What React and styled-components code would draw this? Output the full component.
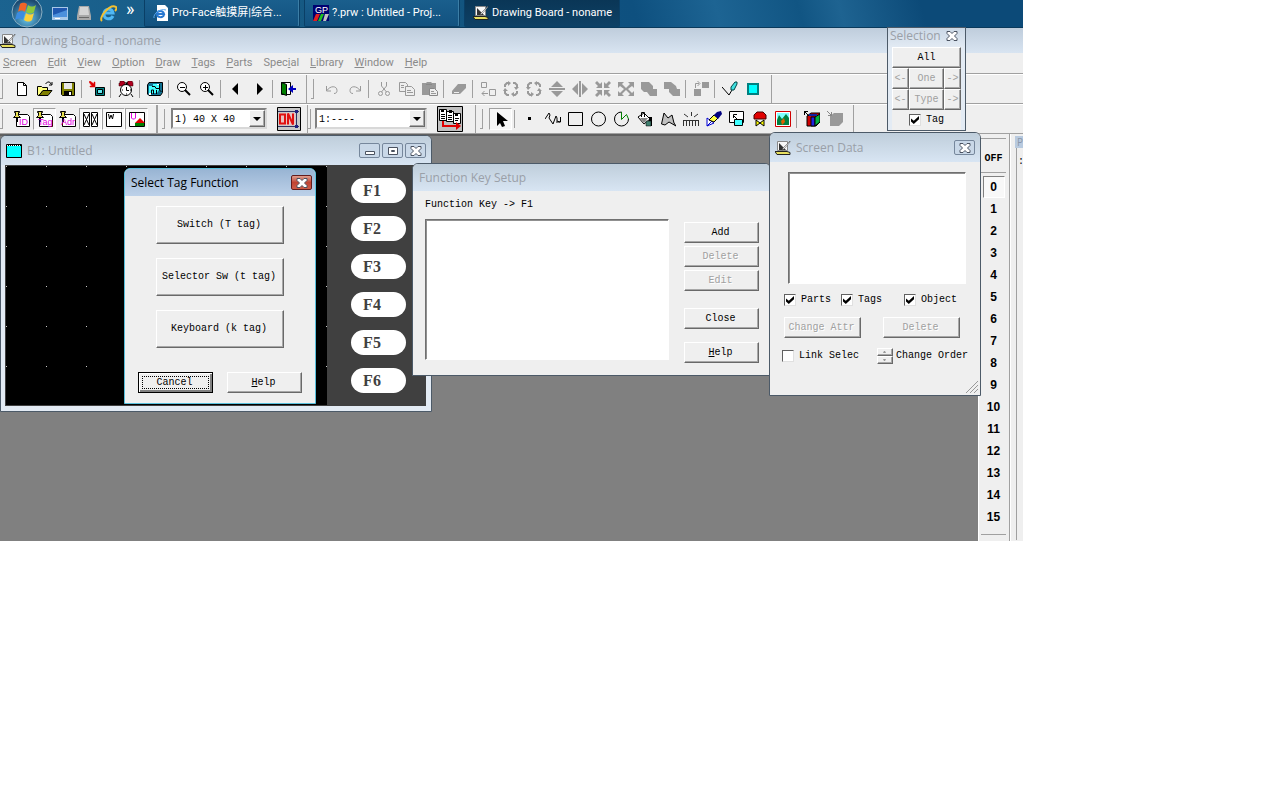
//IMPORT FUNCTIONALITY
import React, { useState } from 'react'
import styled, { createGlobalStyle, css } from 'styled-components'

//DATA
const menuItems = [
	['', 'S', 'creen'],
	['', 'E', 'dit'],
	['', 'V', 'iew'],
	['', 'O', 'ption'],
	['', 'D', 'raw'],
	['', 'T', 'ags'],
	['', 'P', 'arts'],
	['Spec', 'i', 'al'],
	['', 'L', 'ibrary'],
	['', 'W', 'indow'],
	['', 'H', 'elp'],
]

const fileTools = ['new', 'open', 'save', '|', 'transfer', '|', 'alarm', '|', 'project', '|', 'zoomOut', 'zoomIn', '|', 'prev', 'next', '|', 'exit']
const editTools = ['undo', 'redo', '|', 'cut', 'copy', 'paste', '|', 'erase', '|', 'duplicate', 'rotateLeft', 'rotateRight', 'flipV', 'flipH', 'shrink', 'expand', 'front', 'back', '|', 'align', '|', 'pen', 'color']
const drawTools = ['dot', 'polyline', 'rect', 'circle', 'pie', 'fill', 'polygon', 'scale', 'mark', 'load', 'lamp', 'image', '|', 'library', 'libraryOff']
const pageNumbers = Array.from({ length: 15 }, (_, index) => index + 1)
const functionKeys = ['F1', 'F2', 'F3', 'F4', 'F5', 'F6']

//ICONS
const icons = {
	new: <path d="M3.5 1.5h6l3 3v10h-9zM9.5 1.5v3h3" fill="#fff" stroke="#000" />,
	open: (
		<>
			<path d="M.5 14V5.5h4l1 1h5v3H6l-4 5z" fill="#ffff80" stroke="#000" />
			<path d="M2 14.5l4-5h9l-4 5z" fill="#808000" stroke="#000" />
			<path d="M8.5 3l2-2h2l2 2.5M15 1v3h-3" fill="none" stroke="#000" />
		</>
	),
	save: (
		<>
			<path d="M1.5 1.5h13v13h-12l-1-1z" fill="#808000" stroke="#000" />
			<path d="M4 2h8v6H4z" fill="#e8e8e8" />
			<path d="M4 10h8v4H4z" fill="#000" />
			<path d="M9 11h2v3H9z" fill="#fff" />
		</>
	),
	transfer: (
		<>
			<path d="M0 1l1-1 4 3V1h1v5H1V5h2z" fill="#e00000" stroke="#e00000" strokeWidth="0.5" />
			<path d="M6.5 6.5h9v8h-9z" fill="#008080" stroke="#000" />
			<path d="M8.5 8.5h5v4h-5z" fill="#60e8f0" stroke="#000" />
		</>
	),
	alarm: (
		<>
			<path d="M2 0h4v1h1v3H5v1H1V2h1zM10 0h4l1 2v3h-4V4H9V1h1z" fill="#b00020" stroke="#300" strokeWidth="0.5" />
			<circle cx="8" cy="9" r="5.5" fill="#fff" stroke="#000" />
			<path d="M8.5 6v3.5H11M3 13l-2 3M13 13l2 3M7 2h3M8.5 2v2M4 9h1M12 9h1M8 13h1" fill="none" stroke="#000" />
		</>
	),
	project: (
		<>
			<path d="M2 1.5h13.5v10l-2 3H2L.5 13V4z" fill="#107090" stroke="#000" />
			<path d="M2 5h4V3h6v6l-2 3H2z" fill="#40ffff" />
			<path d="M4.5 13V9h2v4M9.5 13V9M12.5 3v6l2 2M5 5.5h3l1 2h3" stroke="#000" fill="none" />
			<path d="M2 12h2v2H2zM10 3h2v1h-2z" fill="#fff" />
		</>
	),
	zoomOut: (
		<>
			<circle cx="6" cy="6" r="4.5" fill="#fff" stroke="#000" />
			<path d="M4 6.5h5" stroke="#000" />
			<path d="M9 9l5 5" stroke="#000" strokeWidth="2" />
		</>
	),
	zoomIn: (
		<>
			<circle cx="6" cy="6" r="4.5" fill="#fff" stroke="#000" />
			<path d="M4 6.5h5M6.5 4v5" stroke="#000" />
			<path d="M9 9l5 5" stroke="#000" strokeWidth="2" />
		</>
	),
	prev: <path d="M10 2v12L4 8z" fill="#000" />,
	next: <path d="M6 2v12l6-6z" fill="#000" />,
	exit: (
		<>
			<path d="M1.5 1.5h9v12h-9z" fill="#fff" stroke="#000" />
			<path d="M1.5 1.5l5 2v11l-5-2z" fill="#008000" stroke="#000" />
			<path d="M16 7h-3V4L8 8l5 4V9h3z" fill="#0000c0" />
		</>
	),
	undo: <path d="M2.5 5v5H7M3 9.5c3-5 10-5 10 0 0 2-1 3-3 3" fill="none" stroke="#999" />,
	redo: <path d="M13.5 5v5H9M13 9.5c-3-5-10-5-10 0 0 2 1 3 3 3" fill="none" stroke="#999" />,
	cut: (
		<g fill="none" stroke="#999">
			<path d="M5.5 1v4l5 6M10.5 1v4l-5 6" />
			<circle cx="4.5" cy="12.5" r="2" />
			<circle cx="11.5" cy="12.5" r="2" />
		</g>
	),
	copy: (
		<g fill="#eee" stroke="#999">
			<path d="M.5 1.5h6l2 2v7h-8z" />
			<path d="M6.5 5.5h6l3 3v6h-9z" />
			<path d="M2 4.5h3M2 6.5h3M8 9.5h4M8 11.5h6" />
		</g>
	),
	paste: (
		<>
			<path d="M0 2h4l1-1h4l1 1h4v12H0z" fill="#999" />
			<path d="M4 3.5h6M7.5 7.5h5l3 3v4h-8z" fill="#eee" stroke="#888" />
			<path d="M9 10.5h3M9 12.5h5" stroke="#999" />
		</>
	),
	erase: (
		<>
			<path d="M7 3h8v4l-6 6H1v-3z" fill="#999" />
			<path d="M2.5 10.5h6v2h-6z" fill="#efefef" stroke="#999" />
		</>
	),
	duplicate: (
		<g fill="none" stroke="#999">
			<path d="M1.5 1.5h5v5h-5zM9.5 8.5h6v6h-6zM2 12.5h6M4.5 10L2 12.5 4.5 15" />
		</g>
	),
	rotateLeft: (
		<g fill="none" stroke="#999" strokeWidth="2">
			<path d="M2 6V4l2-2h2M10 2h2l2 2v2M14 10v2l-2 2h-2M6 14H4l-2-2v-2" />
			<path d="M5 0v5l3-3zM11 6h5l-3 3zM11 11v5l-3-3zM0 10h5l-3-3z" fill="#999" stroke="none" />
		</g>
	),
	rotateRight: (
		<g fill="none" stroke="#999" strokeWidth="2">
			<path d="M2 6V4l2-2h2M10 2h2l2 2v2M14 10v2l-2 2h-2M6 14H4l-2-2v-2" />
			<path d="M11 0v5L8 2zM11 10h5l-3-3zM5 11v5l3-3zM0 6h5L2 9z" fill="#999" stroke="none" />
		</g>
	),
	flipV: <path d="M8 0l6 6H2zM2 10h12l-6 6zM0 7h16v2H0z" fill="#999" />,
	flipH: <path d="M6 2v12L0 8zM10 2l6 6-6 6zM7 0h2v16H7z" fill="#999" />,
	shrink: <path d="M2 0l3 3 2-2v6H1l2-2-3-3zM14 0l-3 3-2-2v6h6l-2-2 3-3zM2 16l3-3 2 2V9H1l2 2-3 3zM14 16l-3-3-2 2V9h6l-2 2 3 3z" fill="#999" />,
	expand: <path d="M0 1h6L4 3l4 4 4-4-2-2h6v6l-2-2-4 3 4 4 2-2v5h-6l2-2-4-4-4 4 2 2H0v-5l2 2 4-4-4-3-2 2z" fill="#999" />,
	front: <path d="M0 1h8l4 4v3h4v7H9l-3-4H3L0 8z" fill="#999" />,
	back: <path d="M0 1h7l5 4 1 3h3v7H9l-4-4V8H0z" fill="#999" />,
	align: (
		<>
			<path d="M9 1h7v6H9zM1 8h7v7H1z" fill="#999" />
			<path d="M2.5 7V2.5H6M4.5 0L7 2.5 4.5 5" fill="none" stroke="#999" />
		</>
	),
	pen: (
		<>
			<path d="M0 6l7 8 3-5" fill="none" stroke="#000" />
			<path d="M9 9V6l4-5h2v2l-3 6z" fill="#40e0e0" stroke="#044" />
		</>
	),
	color: <path d="M3 3h10v10H3z" fill="#00ffff" stroke="#008080" strokeWidth="2" />,
	cursor: <path d="M4 1v14l3-3 2 4 3-1-2-5h5z" fill="#000" />,
	dot: <path d="M6 6h3v3H6z" fill="#000" />,
	polyline: <path d="M0 8l4-6 1 2-1 3 4 6 3-8 1 2v3l3 1M15.5 6v5H11" fill="none" stroke="#000" />,
	rect: <path d="M.5 1.5h14v13H.5z" fill="none" stroke="#000" />,
	circle: <circle cx="7.5" cy="8" r="7" fill="none" stroke="#000" />,
	pie: (
		<>
			<path d="M7.5 1a7 7 0 1 0 7 7" fill="none" stroke="#000" />
			<path d="M7.5 1v7.5l5-5 2 4.5" fill="none" stroke="#008000" />
		</>
	),
	fill: (
		<>
			<path d="M1 6l6-4 6 6-6 5z" fill="#fff" stroke="#000" />
			<path d="M3 7h8l-4 5z" fill="#888" />
			<path d="M4.5 6V1.5h3V6" fill="none" stroke="#000" />
			<path d="M12 6h3v9h-3z" fill="#000" />
			<path d="M9 10h5v5H9z" fill="#408070" stroke="#000" strokeWidth="0.5" />
		</>
	),
	polygon: <path d="M1.5 13L4 2l4 5 4-3 2 8 2 3-7-4-4 3z" fill="#c0c0c0" stroke="#000" />,
	scale: <path d="M0 9.5h16M.5 9v6M3.5 9v6M6.5 9v6M9.5 9v6M12.5 9v6M15.5 9v6M1 3l4 3M8.5 1v4M15 3l-4 3" fill="none" stroke="#333" />,
	mark: (
		<>
			<path d="M1 15V7l7 5zM1 15l7-7" fill="#fff" stroke="#0000d0" />
			<path d="M3 9l5-5 4 3-4 4z" fill="#ffff40" stroke="#000" />
			<path d="M8 4l3-3 4-1 1 3-4 5z" fill="#000080" />
		</>
	),
	load: (
		<>
			<path d="M.5 .5h14v11H.5z" fill="#fff" stroke="#000" />
			<path d="M4 4l4 4M4.5 7V3.500H8" fill="none" stroke="#000" />
			<path d="M5.5 8.5h8v6h-8z" fill="#40ffff" stroke="#000" />
		</>
	),
	lamp: (
		<>
			<path d="M5 1h6l3 3v4H2V4z" fill="#e00000" stroke="#400" />
			<path d="M4 9l4 3 4-3v6l-4-3-4 3z" fill="#ffff00" stroke="#000" />
		</>
	),
	image: (
		<>
			<path d="M.5 .5h15v15H.5z" fill="#fff" stroke="#d00000" />
			<path d="M2 2h12v12H2z" fill="#80ffff" />
			<path d="M2 14V9l2-5 3 4 4-5 3 4v7z" fill="#008040" />
			<path d="M6 10l3-3 1 4-3 3z" fill="#e06000" />
		</>
	),
	library: (
		<>
			<path d="M3 5l4-3h9v9l-4 4H3z" fill="#d00000" stroke="#000" />
			<path d="M7 6h4v9H7z" fill="#2020e0" stroke="#000" />
			<path d="M11 6l5-3v8l-5 4z" fill="#00b040" stroke="#000" />
			<path d="M5 3h8v2H5z" fill="#1020a0" />
			<path d="M0 .5h4M.5 0v4M0 0l5 5" stroke="#000" />
		</>
	),
	libraryOff: (
		<>
			<path d="M3 5l4-3h9v9l-4 4H3z" fill="#999" />
			<path d="M0 0l5 5M4.5 1v3.5H1" stroke="#888" fill="none" />
		</>
	),
}

function Icon({ name, size = 16 }) {
	return (
		<svg width={size} height={size} viewBox="0 0 16 16" aria-hidden="true">
			{icons[name]}
		</svg>
	)
}

function BoardIcon() {
	return (
		<svg width="16" height="16" viewBox="0 0 16 16" aria-hidden="true">
			<path d="M2.5 1.5h10v9h-10z" fill="#f8f8f8" stroke="#888" />
			<path d="M4 3l7 7H4z" fill="#333" />
			<path d="M15 1L8 8l-1 2 2-1 6-7z" fill="#fff" stroke="#333" strokeWidth="0.5" />
			<path d="M0 11.5h12l3 1v2H2z" fill="#e8e060" stroke="#222" />
		</svg>
	)
}

function TagIcon({ text }) {
	return (
		<svg width="18" height="18" viewBox="0 0 18 18" aria-hidden="true">
			<path d="M3.5 4.5h11l2 2v10h-13z" fill="#fff" stroke="#000" />
			<path d="M1.5 1.5h5v1h-1v3l2 2h-7l2-2v-3h-1z" fill="#e8e050" stroke="#000" />
			<path d="M4.5 8v4" stroke="#000" />
			<text x={text.length > 2 ? 2 : 6} y="15" fill="#e000e0" fontSize="9" fontFamily="Liberation Sans, sans-serif">
				{text}
			</text>
		</svg>
	)
}

function BracketIcon() {
	return (
		<svg width="18" height="18" viewBox="0 0 18 18" aria-hidden="true">
			<path d="M1.5 2.5h6v14h-6zM9.5 2.5h6v14h-6z" fill="#fff" stroke="#000" />
			<path d="M2 4l5 11M7 4L2 15M10 4l5 11M15 4l-5 11" fill="none" stroke="#000" />
		</svg>
	)
}

function WordIcon() {
	return (
		<svg width="18" height="18" viewBox="0 0 18 18" aria-hidden="true">
			<path d="M1.5 2.5h15v14h-15z" fill="#fff" stroke="#000" />
			<path d="M3.5 4l1 5L6 5l1.5 4 1-5" fill="none" stroke="#000" />
		</svg>
	)
}

function UserIcon() {
	return (
		<svg width="18" height="18" viewBox="0 0 18 18" aria-hidden="true">
			<path d="M1.5 2.5h15v14h-15z" fill="#fff" stroke="#000" />
			<path d="M3.5 3v5l1 1h2l1-1V3" fill="none" stroke="#e000e0" />
			<path d="M7 13l5-5 5 5z" fill="#e00000" />
			<path d="M7 13h9v3H7z" fill="#008000" />
		</svg>
	)
}

function OnIcon() {
	return (
		<svg width="24" height="24" viewBox="0 0 24 24" aria-hidden="true">
			<path d="M.5 .5h23v23H.5z" fill="#c8c8c8" stroke="#000" />
			<path d="M1 4.5h21M1 19.5h21M19.5 3v18" stroke="#303060" />
			<path d="M18 4.5h3M18 19.5h3" stroke="#202080" strokeWidth="3" />
			<path d="M2 6h16v12H2z" fill="#e8c0c0" />
			<path d="M3 7.5h5v9H3z" fill="none" stroke="#e01010" strokeWidth="2" />
			<path d="M11 17.5v-11l5 11v-11" fill="none" stroke="#e01010" strokeWidth="2" />
		</svg>
	)
}

function PagesIcon() {
	return (
		<svg width="26" height="26" viewBox="0 0 26 26" aria-hidden="true">
			<path d="M.5 .5h25v25H.5z" fill="#c0c0c0" stroke="#000" />
			<path d="M2.5 3.5h7v11h-7zM9.5 5.5h7v10h-7zM16.5 7.5h7v10h-7z" fill="#fff" stroke="#000" />
			<path d="M4 8.5h4M4 10.5h4M4 12.5h4M11 9.5h4M11 11.5h4M11 13.5h4M18 12.5h4M18 14.5h3" stroke="#000" />
			<path d="M4 3h3v3H4zM12 4h3v3h-3zM18 7h3v3h-3z" fill="#000" />
			<path d="M6 15v5h14" fill="none" stroke="#e00000" strokeWidth="2" />
			<path d="M19 16l5 4-5 4z" fill="#e00000" />
		</svg>
	)
}

function CrossIcon() {
	return (
		<svg width="12" height="10" viewBox="0 0 12 10" aria-hidden="true">
			<path d="M1 .5h3l2 2 2-2h3v2L8.5 5 11 7.5v2H8l-2-2-2 2H1v-2L3.5 5 1 2.5z" fill="#fff" stroke="#4a5260" />
		</svg>
	)
}

function StartOrb() {
	return (
		<svg width="32" height="28" viewBox="0 0 32 28" aria-hidden="true">
			<defs>
				<radialGradient id="orb" cx="50%" cy="70%" r="60%">
					<stop offset="0" stopColor="#68c8f0" />
					<stop offset="1" stopColor="#1c4a70" />
				</radialGradient>
			</defs>
			<circle cx="16" cy="12" r="15" fill="url(#orb)" stroke="#8ab0c4" />
			<path d="M9 4c3-2 5-1 7 0l-2 8c-2-2-5-2-7 0z" fill="#f06428" />
			<path d="M17 5c3 2 5 2 8 0l-2 7c-2 2-5 2-8 0z" fill="#8cc83c" />
			<path d="M6 13c3-2 5-2 8 0l-2 7c-2-2-5-2-8 0z" fill="#3c8ce0" />
			<path d="M15 13c3 2 5 2 8 0l-2 7c-2 2-5 2-8 0z" fill="#fcd038" />
		</svg>
	)
}

function DesktopIcon() {
	return (
		<svg width="16" height="14" viewBox="0 0 16 14" aria-hidden="true">
			<path d="M0 0h16v13H0z" fill="#a8c8e8" />
			<path d="M1 1h14v9H1z" fill="#2058b0" />
			<path d="M1 8l14-5v7H1z" fill="#4c90dc" />
			<path d="M3 11h5v1H3z" fill="#fff" />
		</svg>
	)
}

function DriveIcon() {
	return (
		<svg width="14" height="15" viewBox="0 0 14 15" aria-hidden="true">
			<path d="M2 0h10l2 10v4H0v-4z" fill="#a8a8a8" />
			<path d="M3 1h8l1 8H2z" fill="#d4d4d4" />
			<path d="M2 11h10v1H2z" fill="#686868" />
		</svg>
	)
}

function ExplorerIcon() {
	return (
		<svg width="17" height="17" viewBox="0 0 17 17" aria-hidden="true">
			<path d="M13 11c-2 4-9 4-9-2s8-6 9-1H5" fill="none" stroke="#50b8f4" strokeWidth="3" />
			<path d="M2 16c-4-3 8-18 14-14 1 1 0 3-1 4" fill="none" stroke="#f4c030" strokeWidth="2" />
		</svg>
	)
}

function PageIcon() {
	return (
		<svg width="16" height="16" viewBox="0 0 16 16" aria-hidden="true">
			<path d="M4 0h8l3 3v13H4z" fill="#fff" />
			<path d="M11 10c-1 3-7 3-7-1s6-4 7 0H5" fill="none" stroke="#2878d0" strokeWidth="2" />
			<path d="M1 13C0 9 7 3 13 5" fill="none" stroke="#58a8f0" />
		</svg>
	)
}

function GpIcon() {
	return (
		<svg width="16" height="16" viewBox="0 0 16 16" aria-hidden="true">
			<path d="M0 0h16v16H0z" fill="#000070" />
			<text x="2" y="8" fill="#fff" fontSize="9" fontFamily="Liberation Sans, sans-serif">
				GP
			</text>
			<path d="M3 9h4l-3 7H0z" fill="#e02020" />
			<path d="M8 9h3l-3 7H5z" fill="#20c020" />
			<path d="M12 9h4l-3 7h-3z" fill="#c0c0c0" />
		</svg>
	)
}

//COMPONENTS
function Tools({ names }) {
	return names.map((name, index) =>
		name === '|' ? (
			<Separator key={index} />
		) : (
			<ToolButton key={index} aria-label={name}>
				<Icon name={name} />
			</ToolButton>
		)
	)
}

function Dropdown({ label, value, width }) {
	return (
		<SelectFrame $width={width}>
			<Select aria-label={label}>
				<option>{value}</option>
			</Select>
			<SelectArrow>
				<svg width="8" height="4" viewBox="0 0 8 4" aria-hidden="true">
					<path d="M0 0h8L4 4z" fill="#000" />
				</svg>
			</SelectArrow>
		</SelectFrame>
	)
}

function Check({ label, defaultChecked }) {
	return (
		<CheckLabel>
			<CheckBox type="checkbox" defaultChecked={defaultChecked} />
			{label}
		</CheckLabel>
	)
}

export default function App() {
	const [activePage, setActivePage] = useState(0)

	return (
		<Desktop>
			<GlobalStyle />
			<Taskbar>
				<QuickLaunch>
					<QuickButton aria-label="Start">
						<StartOrb />
					</QuickButton>
					<QuickButton aria-label="Desktop">
						<DesktopIcon />
					</QuickButton>
					<QuickButton aria-label="Drive">
						<DriveIcon />
					</QuickButton>
					<QuickButton aria-label="Browser">
						<ExplorerIcon />
					</QuickButton>
					<More>»</More>
				</QuickLaunch>
				<Task>
					<PageIcon />
					Pro-Face触摸屏|综合...
				</Task>
				<Task>
					<GpIcon />
					?.prw : Untitled - Proj...
				</Task>
				<Task $active>
					<BoardIcon />
					Drawing Board - noname
				</Task>
			</Taskbar>

			<AppTitle>
				<BoardIcon />
				Drawing Board - noname
			</AppTitle>
			<MenuBar>
				{menuItems.map(([before, key, after]) => (
					<MenuItem key={before + key + after}>
						{before}
						<u>{key}</u>
						{after}
					</MenuItem>
				))}
			</MenuBar>

			<ToolRow>
				<ToolGroup $width="307px">
					<Tools names={fileTools} />
				</ToolGroup>
				<ToolGroup $width="465px" $grip>
					<Tools names={editTools} />
				</ToolGroup>
			</ToolRow>
			<ToolRow>
				<ToolGroup $width="158px" $thick>
					<ToolButton aria-label="ID">
						<TagIcon text="ID" />
					</ToolButton>
					<ToolButton $pressed aria-label="Tag">
						<TagIcon text="Tag" />
					</ToolButton>
					<ToolButton aria-label="Address">
						<TagIcon text="Adr" />
					</ToolButton>
					<ToolButton $pressed aria-label="Parts">
						<BracketIcon />
					</ToolButton>
					<ToolButton $pressed aria-label="Word">
						<WordIcon />
					</ToolButton>
					<ToolButton $pressed aria-label="User">
						<UserIcon />
					</ToolButton>
				</ToolGroup>
				<ToolGroup $width="150px" $grip>
					<Dropdown label="Grid" value="1) 40 X 40" width="96px" />
					<LargeTool aria-label="ON">
						<OnIcon />
					</LargeTool>
				</ToolGroup>
				<ToolGroup $width="168px" $narrow>
					<Dropdown label="State" value="1:----" width="112px" />
					<LargeTool aria-label="Pages">
						<PagesIcon />
					</LargeTool>
				</ToolGroup>
				<ToolGroup $width="378px" $grip>
					<ToolButton $pressed aria-label="Select">
						<Icon name="cursor" />
					</ToolButton>
					<Separator />
					<Tools names={drawTools} />
				</ToolGroup>
			</ToolRow>

			<Workspace>
				<Canvas />
				<PageBar>
					<OffButton>OFF</OffButton>
					<PageButton $active={activePage === 0} onClick={() => setActivePage(0)}>
						0
					</PageButton>
					{pageNumbers.map(number => (
						<PageButton key={number} $active={activePage === number} onClick={() => setActivePage(number)}>
							{number}
						</PageButton>
					))}
				</PageBar>
				<SidePanel>
					<SideTitle>P</SideTitle>
					<SideBody>:</SideBody>
				</SidePanel>
			</Workspace>

			<BoardWindow>
				<TitleBar $tall>
					<svg width="16" height="14" viewBox="0 0 16 14" aria-hidden="true">
						<path d="M.5 .5h15v13H.5z" fill="#00ffff" stroke="#000" />
						<path d="M1 1.5h14" stroke="#000" />
						<path d="M1 1.5h14" stroke="#fff" strokeDasharray="1 1" />
					</svg>
					<TitleText>B1: Untitled</TitleText>
					<WindowButton aria-label="Minimize">
						<svg width="12" height="10" viewBox="0 0 12 10" aria-hidden="true">
							<path d="M1.5 5.5h9v3h-9z" fill="#fff" stroke="#4a5260" />
						</svg>
					</WindowButton>
					<WindowButton aria-label="Restore">
						<svg width="12" height="10" viewBox="0 0 12 10" aria-hidden="true">
							<path d="M1.5 1.5h9v7h-9zM4.5 4.5h3v1h-3z" fill="#fff" stroke="#4a5260" />
						</svg>
					</WindowButton>
					<WindowButton aria-label="Close board">
						<CrossIcon />
					</WindowButton>
				</TitleBar>
				<BoardBody>
					<BoardGrid aria-hidden="true">
						<defs>
							<pattern id="grid" width="40" height="40" patternUnits="userSpaceOnUse">
								<rect width="1" height="1" fill="#ccc" />
							</pattern>
						</defs>
						<rect width="100%" height="100%" fill="url(#grid)" />
					</BoardGrid>
					<KeyPad>
						{functionKeys.map(name => (
							<FunctionKey key={name}>{name}</FunctionKey>
						))}
					</KeyPad>
				</BoardBody>
			</BoardWindow>

			<KeyWindow>
				<TitleBar>
					<TitleText>Function Key Setup</TitleText>
				</TitleBar>
				<KeyBody>
					<div>
						<KeyLabel>Function Key -&gt; F1</KeyLabel>
						<ListBox $height="141px" />
					</div>
					<KeyButtons>
						<PushButton>Add</PushButton>
						<PushButton disabled>Delete</PushButton>
						<PushButton disabled>Edit</PushButton>
						<PushButton $gap="14px">Close</PushButton>
						<PushButton $gap="10px">
							<u>H</u>elp
						</PushButton>
					</KeyButtons>
				</KeyBody>
			</KeyWindow>

			<TagWindow>
				<TitleBar $active>
					<TitleText>Select Tag Function</TitleText>
					<WindowButton $danger aria-label="Close dialog">
						<CrossIcon />
					</WindowButton>
				</TitleBar>
				<TagBody>
					<PushButton $large>Switch (T tag)</PushButton>
					<PushButton $large>Selector Sw (t tag)</PushButton>
					<PushButton $large>Keyboard (k tag)</PushButton>
				</TagBody>
				<TagFooter>
					<PushButton $default>Cancel</PushButton>
					<PushButton>
						<u>H</u>elp
					</PushButton>
				</TagFooter>
			</TagWindow>

			<SelectionWindow>
				<SelectionTitle>
					Selection
					<PlainButton aria-label="Close selection">
						<CrossIcon />
					</PlainButton>
				</SelectionTitle>
				<SelectionGrid>
					<AllButton>All</AllButton>
					<GridButton disabled>&lt;-</GridButton>
					<GridButton disabled>One</GridButton>
					<GridButton disabled>-&gt;</GridButton>
					<GridButton disabled>&lt;-</GridButton>
					<GridButton disabled>Type</GridButton>
					<GridButton disabled>-&gt;</GridButton>
				</SelectionGrid>
				<SelectionCheck>
					<Check label="Tag" defaultChecked />
				</SelectionCheck>
			</SelectionWindow>

			<DataWindow>
				<TitleBar $tall>
					<BoardIcon />
					<TitleText>Screen Data</TitleText>
					<WindowButton aria-label="Close data">
						<CrossIcon />
					</WindowButton>
				</TitleBar>
				<DataBody>
					<ListBox $height="112px" />
					<DataChecks>
						<Check label="Parts" defaultChecked />
						<Check label="Tags" defaultChecked />
						<Check label="Object" defaultChecked />
					</DataChecks>
					<DataButtons>
						<PushButton disabled>Change Attr</PushButton>
						<PushButton disabled>Delete</PushButton>
					</DataButtons>
					<DataOrder>
						<Check label="Link Selec" />
						<OrderLabel>
							<Spinner>
								<SpinButton disabled aria-label="Order up">
									<svg width="3" height="2" viewBox="0 0 3 2" aria-hidden="true">
										<path d="M0 2h3L2 0H1z" fill="#999" />
									</svg>
								</SpinButton>
								<SpinButton disabled aria-label="Order down">
									<svg width="3" height="2" viewBox="0 0 3 2" aria-hidden="true">
										<path d="M0 0h3L2 2H1z" fill="#999" />
									</svg>
								</SpinButton>
							</Spinner>
							Change Order
						</OrderLabel>
					</DataOrder>
				</DataBody>
				<ResizeGrip>
					<svg width="12" height="12" viewBox="0 0 12 12" aria-hidden="true">
						<path d="M0 12L12 0M4 12l8-8M8 12l4-4" stroke="#999" />
					</svg>
				</ResizeGrip>
			</DataWindow>
		</Desktop>
	)
}

//STYLES
const uiFont = '"Open Sans", "Noto Sans CJK SC", sans-serif'
const smallFont = 'Roboto, "Noto Sans CJK SC", sans-serif'
const fixedFont = '"Liberation Mono", monospace'

const GlobalStyle = createGlobalStyle`
	* {
		box-sizing: border-box;
	}
	body {
		margin: 0;
		background: #fff;
	}
	button, input, select {
		margin: 0;
		padding: 0;
		font: inherit;
		color: inherit;
	}
	svg {
		display: block;
		flex: none;
	}
`

const raised = css`
	border: 1px solid;
	border-color: #fff #696969 #696969 #fff;
	box-shadow: inset -1px -1px 0 #a8a8a8;
`

const sunken = css`
	border: 1px solid;
	border-color: #606060 #e0e0e0 #e0e0e0 #606060;
`

const Desktop = styled.div`
	position: relative;
	margin-right: 257px;
	overflow: hidden;
	background: #efefef;
	color: #000;
	font-family: ${fixedFont};
	font-size: 10px;
	line-height: 12px;
	white-space: nowrap;
`

const Taskbar = styled.div`
	display: flex;
	gap: 4px;
	height: 28px;
	background: linear-gradient(75deg, #1b6390 0%, #14567f 40%, #0e507f 62%, #1d6493 70%, #115583 78%, #1e6391 82%, #0c4a78 90%);
	border-bottom: 1px solid #0a3a5c;
	color: #fff;
	font-family: ${smallFont};
	font-size: 11px;
`

const QuickLaunch = styled.div`
	display: flex;
	align-items: center;
	gap: 9px;
	width: 140px;
	padding-left: 11px;
`

const QuickButton = styled.button`
	border: none;
	background: none;
`

const More = styled.span`
	padding-bottom: 10px;
	font-size: 18px;
	line-height: 20px;
`

const Task = styled.button`
	display: flex;
	align-items: center;
	gap: 3px;
	width: 156px;
	padding-left: 8px;
	overflow: hidden;
	border: 1px solid #0a3f66;
	border-top: none;
	border-radius: 0 0 2px 2px;
	background: ${props => (props.$active ? 'linear-gradient(#0a3656, #0d4065)' : 'linear-gradient(#1a5f8d, #125280)')};
	box-shadow: ${props => (props.$active ? 'none' : 'inset -1px 0 0 #3c7ea6')};
`

const AppTitle = styled.div`
	display: flex;
	align-items: center;
	gap: 5px;
	height: 25px;
	background: linear-gradient(#bfcddc, #d8e4f1);
	color: #9aa0a8;
	font-family: ${uiFont};
	font-size: 12px;
`

const MenuBar = styled.nav`
	display: flex;
	align-items: center;
	gap: 11px;
	height: 21px;
	padding-left: 3px;
	border-bottom: 1px solid #a0a0a0;
	color: #8a8a8a;
	font-family: ${smallFont};
	font-size: 11px;
`

const MenuItem = styled.button`
	border: none;
	background: none;
`

const ToolRow = styled.div`
	display: flex;
	height: 30px;
	border-top: 1px solid #fff;
	border-bottom: 1px solid #a0a0a0;
`

const ToolGroup = styled.div`
	display: flex;
	align-items: center;
	width: ${props => props.$width};
	padding-bottom: 1px;
	padding-left: ${props => (props.$narrow ? '7px' : props.$grip ? '13px' : '10px')};
	border-right: ${props => (props.$thick ? '2px' : '1px')} solid #a0a0a0;
	position: relative;
	&::before {
		content: '';
		position: absolute;
		left: ${props => (props.$grip ? '4px' : '0')};
		top: 4px;
		bottom: 4px;
		width: 2px;
		border-right: 1px solid #a0a0a0;
		border-bottom: 1px solid #a0a0a0;
	}
`

const ToolButton = styled.button`
	display: grid;
	place-items: center;
	width: 23px;
	height: 22px;
	border: 1px solid;
	border-color: ${props => (props.$pressed ? '#a0a0a0 #fff #fff #a0a0a0' : 'transparent')};
	background: ${props => (props.$pressed ? '#f7f7f7' : 'none')};
`

const Separator = styled.span`
	width: 1px;
	height: 18px;
	margin: 0 3px 0 2px;
	background: #a0a0a0;
`

const LargeTool = styled.button`
	margin-left: 10px;
	border: none;
	background: none;
`

const SelectFrame = styled.div`
	position: relative;
	width: ${props => props.$width};
	height: 21px;
	border: 2px solid;
	border-color: #808080 #d8d8d8 #d8d8d8 #808080;
	background: #fff;
`

const Select = styled.select`
	appearance: none;
	display: block;
	width: 100%;
	height: 17px;
	padding: 2px 0 0 2px;
	border: none;
	outline: none;
	background: none;
`

const SelectArrow = styled.span`
	position: absolute;
	top: 0;
	right: 0;
	bottom: 0;
	display: grid;
	place-items: center;
	width: 16px;
	background: #efefef;
	pointer-events: none;
	${raised}
`

const Workspace = styled.div`
	display: flex;
`

const Canvas = styled.main`
	flex: 1;
	border-top: 2px solid #606060;
	background: #808080;
`

const PageBar = styled.div`
	display: flex;
	flex-direction: column;
	align-items: center;
	width: 32px;
	padding: 4px 3px 6px 2px;
	border-right: 1px solid #a0a0a0;
	border-left: 1px solid #fff;
	font-family: 'Liberation Sans', sans-serif;
	font-size: 12px;
	font-weight: bold;
	&::after {
		content: '';
		width: 100%;
		margin-top: 6px;
		border-top: 1px solid #a0a0a0;
	}
`

const OffButton = styled.button`
	width: 100%;
	height: 35px;
	margin-bottom: 3px;
	padding-top: 6px;
	border: 1px solid #a0a0a0;
	border-width: 1px 0;
	background: none;
	font-family: ${fixedFont};
	font-size: 10px;
`

const PageButton = styled.button`
	width: 22px;
	height: 22px;
	border: 1px solid;
	border-color: ${props => (props.$active ? '#808080 #fff #fff #808080' : 'transparent')};
	background: ${props => (props.$active ? '#f8f8f8' : 'none')};
`

const SidePanel = styled.div`
	width: 13px;
	padding: 2px 0 0 4px;
	border-left: 1px solid #fff;
`

const SideTitle = styled.div`
	padding-left: 2px;
	background: #b8cadf;
	color: #8b98aa;
	font-family: ${uiFont};
`

const SideBody = styled.div`
	height: 392px;
	margin-left: 1px;
	padding: 8px 0 0 1px;
	border-left: 1px solid #a0a0a0;
`

const windowFrame = css`
	position: absolute;
	border: 1px solid #4c5a68;
	border-radius: 6px 6px 0 0;
	background: #efefef;
	overflow: hidden;
`

const TitleBar = styled.div`
	display: flex;
	align-items: center;
	gap: 2px;
	height: ${props => (props.$tall ? '29px' : '27px')};
	padding: 0 5px;
	background: ${props => (props.$active ? 'linear-gradient(#98b4d3, #bdd1e9)' : 'linear-gradient(#bfcedb, #d8e5f3)')};
	color: ${props => (props.$active ? '#000' : '#9aa0a8')};
	font-family: ${uiFont};
	font-size: 12px;
`

const TitleText = styled.span`
	flex: 1;
	padding-left: 1px;
	svg + & {
		padding-left: 3px;
	}
`

const WindowButton = styled.button`
	display: grid;
	place-items: center;
	width: 21px;
	height: 15px;
	border: 1px solid ${props => (props.$danger ? '#641c1c' : '#76879c')};
	border-radius: 2px;
	background: ${props => (props.$danger ? 'linear-gradient(#e0a090, #c04434 50%, #cf5c48)' : '#c9d8e8')};
`

const BoardWindow = styled.section`
	${windowFrame}
	left: 0;
	top: 135px;
	width: 432px;
	padding: 0 5px 5px 4px;
	background: #e3ebf4;
	${TitleBar} {
		margin: 0 -5px 0 -4px;
	}
`

const BoardBody = styled.div`
	display: flex;
	height: 241px;
	border: 1px solid #404040;
	background: #000;
`

const BoardGrid = styled.svg`
	flex: 1;
	min-width: 0;
	height: 100%;
`

const KeyPad = styled.div`
	display: flex;
	flex-direction: column;
	align-items: center;
	gap: 13px;
	flex: none;
	width: 98px;
	padding: 12px 0 0 4px;
	background: #404040;
`

const FunctionKey = styled.button`
	width: 55px;
	height: 25px;
	padding-right: 12px;
	border: none;
	border-radius: 13px;
	background: #fff;
	color: #404040;
	font-family: 'Liberation Serif', serif;
	font-size: 16px;
	font-weight: bold;
`

const PushButton = styled.button`
	width: ${props => (props.$large ? '128px' : '75px')};
	height: ${props => (props.$large ? '38px' : '21px')};
	margin-top: ${props => props.$gap || '0'};
	padding: 0 2px 0 0;
	background: #efefef;
	${raised}
	&:disabled {
		color: #a0a0a0;
		text-shadow: 1px 1px 0 #fff;
	}
	${props =>
		props.$default &&
		css`
			border-color: #000;
			box-shadow: inset 1px 1px 0 #fff, inset -2px -2px 0 #808080;
			outline: 1px dotted #000;
			outline-offset: -5px;
		`}
`

const ListBox = styled.div`
	height: ${props => props.$height};
	background: #fff;
	border: 1px solid;
	border-color: #707070 #fff #fff #707070;
	box-shadow: inset 1px 1px 0 #909090;
`

const KeyWindow = styled.section`
	${windowFrame}
	left: 412px;
	top: 163px;
	width: 359px;
	height: 213px;
`

const KeyBody = styled.div`
	display: grid;
	grid-template-columns: 1fr 75px;
	gap: 15px;
	padding: 0 11px 0 12px;
`

const KeyLabel = styled.p`
	margin: 8px 0;
`

const KeyButtons = styled.div`
	display: flex;
	flex-direction: column;
	gap: 3px;
	padding-top: 31px;
`

const TagWindow = styled.section`
	${windowFrame}
	left: 124px;
	top: 168px;
	width: 192px;
	border-color: #58c0dc;
	${TitleBar} {
		padding-right: 3px;
	}
`

const TagBody = styled.div`
	display: flex;
	flex-direction: column;
	align-items: center;
	gap: 14px;
	padding: 10px 0 24px;
`

const TagFooter = styled.div`
	display: flex;
	justify-content: center;
	gap: 14px;
	padding-bottom: 10px;
`

const SelectionWindow = styled.section`
	${windowFrame}
	left: 887px;
	top: 27px;
	width: 79px;
	height: 104px;
	padding: 0 4px;
	border-radius: 0;
	background: linear-gradient(#cbd8e6, #e3ebf4 20px);
`

const SelectionTitle = styled.div`
	display: flex;
	align-items: center;
	justify-content: space-between;
	height: 19px;
	margin: 0 3px 0 -2px;
	padding-bottom: 4px;
	color: #9aa0a8;
	font-family: ${uiFont};
	font-size: 12px;
`

const PlainButton = styled.button`
	border: none;
	background: none;
`

const SelectionGrid = styled.div`
	display: grid;
	grid-template-columns: 17px 1fr 17px;
	grid-auto-rows: 21px;
`

const GridButton = styled.button`
	background: #efefef;
	${raised}
	&:disabled {
		color: #a0a0a0;
	}
`

const AllButton = styled(GridButton)`
	grid-column: 1 / -1;
`

const SelectionCheck = styled.div`
	display: flex;
	justify-content: center;
	align-items: center;
	height: 20px;
	background: #efefef;
`

const CheckLabel = styled.label`
	display: flex;
	align-items: center;
	gap: 5px;
`

const CheckBox = styled.input`
	appearance: none;
	width: 12px;
	height: 12px;
	background: #fff;
	${sunken}
	&:checked::before {
		content: '';
		display: block;
		width: 8px;
		height: 8px;
		margin: 1px;
		background: #000;
		clip-path: polygon(0 30%, 35% 60%, 100% 0, 100% 40%, 35% 100%, 0 70%);
	}
`

const DataWindow = styled.section`
	${windowFrame}
	left: 769px;
	top: 132px;
	width: 212px;
	height: 264px;
`

const DataBody = styled.div`
	padding: 10px 12px 0;
	${ListBox} {
		margin: 0 2px 0 6px;
	}
`

const DataChecks = styled.div`
	display: grid;
	grid-template-columns: 57px 63px 1fr;
	padding: 10px 0 0 2px;
`

const DataButtons = styled.div`
	display: flex;
	justify-content: space-between;
	padding: 11px 8px 0 2px;
	${PushButton} {
		width: 77px;
	}
`

const DataOrder = styled.div`
	display: flex;
	justify-content: space-between;
	padding-top: 10px;
`

const OrderLabel = styled.div`
	display: flex;
	align-items: center;
	gap: 3px;
`

const Spinner = styled.span`
	display: flex;
	flex-direction: column;
`

const SpinButton = styled.button`
	display: grid;
	place-items: center;
	width: 16px;
	height: 8px;
	background: #efefef;
	${raised}
`

const ResizeGrip = styled.span`
	position: absolute;
	right: 2px;
	bottom: 2px;
`
